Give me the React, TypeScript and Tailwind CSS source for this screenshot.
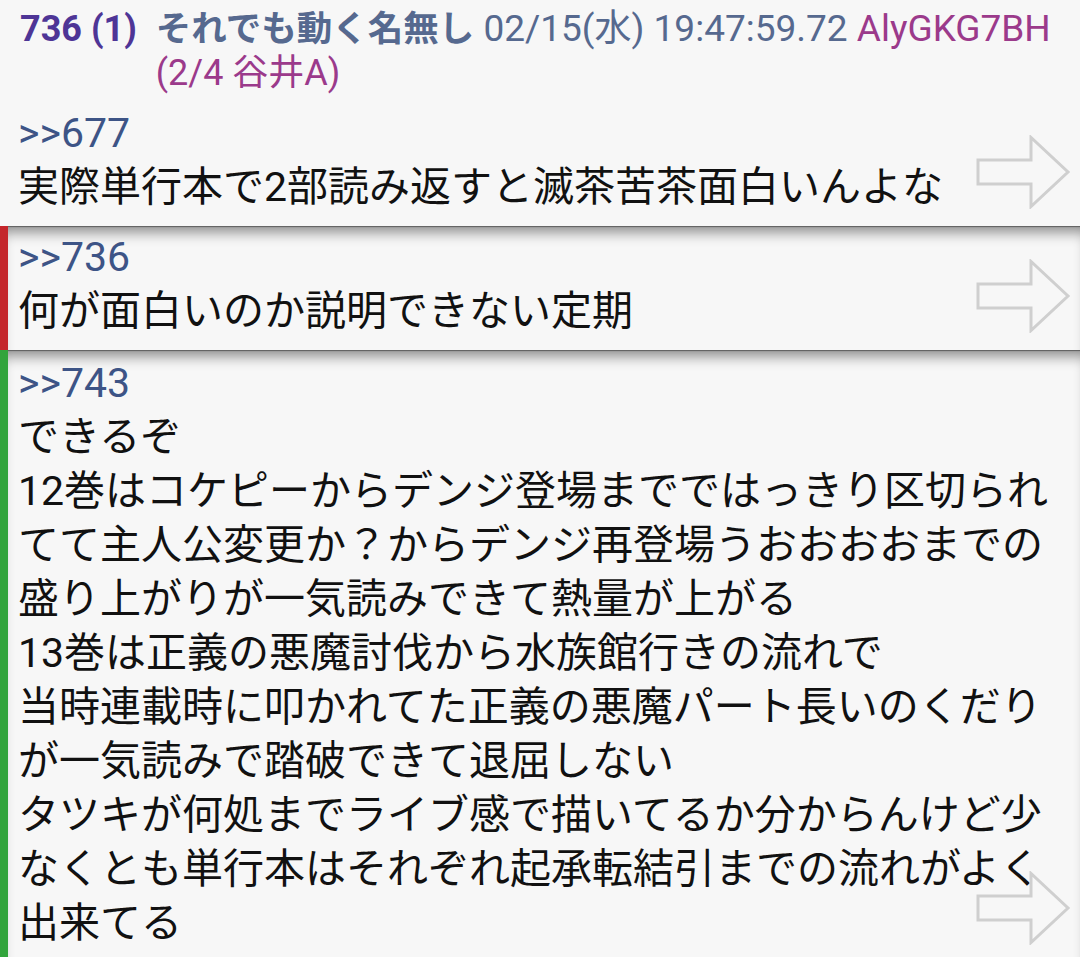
import React from "react";

const FONT = { fontFamily: 'Roboto, "Noto Sans CJK JP", sans-serif' };

function Arrow() {
  return (
    <svg
      className="absolute right-[8px] bottom-[17px]"
      width="96"
      height="74"
      viewBox="0 0 96 74"
      fill="none"
    >
      <path
        d="M2 25H55V2.5L92 37L55 71.5V49H2Z"
        stroke="#cfcfcf"
        strokeWidth="3"
        strokeLinejoin="miter"
      />
    </svg>
  );
}

function Quote({ n }: { n: string }) {
  return <div className="text-[#3d5486]">&gt;&gt;{n}</div>;
}

export default function App() {
  const lines3 = [
    "できるぞ",
    "12巻はコケピーからデンジ登場までではっきり区切られてて主人公変更か？からデンジ再登場うおおおおまでの盛り上がりが一気読みできて熱量が上がる",
    "13巻は正義の悪魔討伐から水族館行きの流れで",
    "当時連載時に叩かれてた正義の悪魔パート長いのくだりが一気読みで踏破できて退屈しない",
    "タツキが何処までライブ感で描いてるか分からんけど少なくとも単行本はそれぞれ起承転結引までの流れがよく出来てる",
  ];
  return (
    <div className="w-[1080px] h-[957px] overflow-hidden bg-[#f7f7f7]" style={FONT}>
      {/* main post */}
      <div className="relative flex">
        <div className="w-[8px] shrink-0" />
        <div className="flex-1 pb-[12px]">
          <div className="flex pl-[12px] pr-[12px] pt-[7px] text-[37px] leading-[44px]">
            <span className="text-[36px] font-bold text-[#4e3596] whitespace-nowrap mr-[19px]">736 (1)</span>
            <div className="flex-1">
              <div className="whitespace-nowrap">
                <span className="text-[35.5px] font-bold text-[#56698f]">それでも動く名無し</span>
                <span className="text-[#56698f]"> 02/15(水) 19:47:59.72 </span>
                <span className="text-[#9b3a8b]">AlyGKG7BH</span>
              </div>
              <div className="text-[#9b3a8b] text-[36px]">(2/4 谷井A)</div>
            </div>
          </div>
          <div className="mt-[11px] pl-[10px] pr-[16px] text-[41px] leading-[54px] text-[#111]">
            <Quote n="677" />
            <div>実際単行本で2部読み返すと滅茶苦茶面白いんよな</div>
          </div>
        </div>
        <Arrow />
      </div>

      {/* quoted 736 */}
      <div className="relative flex">
        <div className="w-[8px] shrink-0 bg-[#c4262b]" />
        <div className="flex-1 pl-[10px] pr-[16px] pt-[4px] pb-[12px] text-[41px] leading-[54px] text-[#111] shadow-[inset_0_2px_1px_-1px_rgba(0,0,0,0.4),inset_0_14px_14px_-8px_rgba(0,0,0,0.45)]">
          <Quote n="736" />
          <div>何が面白いのか説明できない定期</div>
        </div>
        <Arrow />
      </div>

      {/* quoted 743 */}
      <div className="relative flex">
        <div className="w-[8px] shrink-0 bg-[#32a43c]" />
        <div className="flex-1 pl-[10px] pr-[16px] pt-[6px] pb-[12px] text-[41px] leading-[54px] text-[#111] shadow-[inset_0_2px_1px_-1px_rgba(0,0,0,0.4),inset_0_14px_14px_-8px_rgba(0,0,0,0.45)]">
          <Quote n="743" />
          {lines3.map((l, i) => (
            <div key={i}>{l}</div>
          ))}
        </div>
        <Arrow />
      </div>
    </div>
  );
}
